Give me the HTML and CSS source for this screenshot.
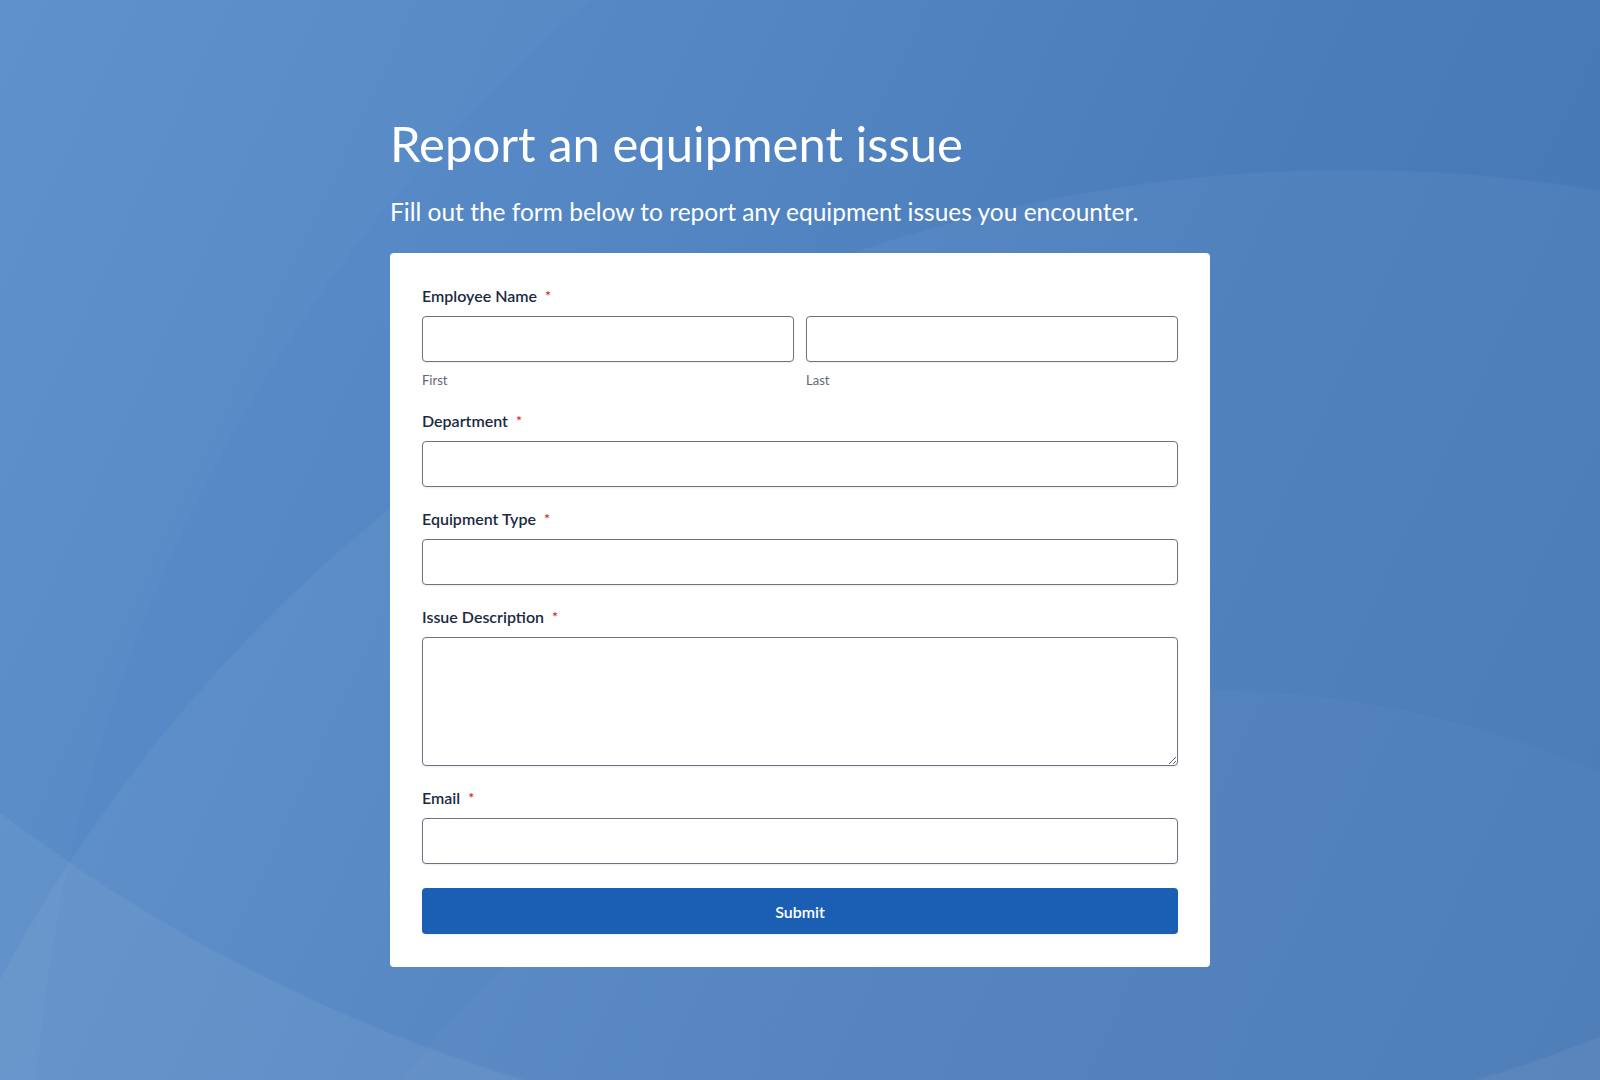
FILE: index.html
```html
<!DOCTYPE html>
<html lang="en">
<head>
<meta charset="utf-8">
<title>Report an equipment issue</title>
<link rel="stylesheet" href="styles.css">
</head>
<body>
<main class="page">
  <header class="intro">
    <h1 class="title">Report an equipment issue</h1>
    <p class="subtitle">Fill out the form below to report any equipment issues you encounter.</p>
  </header>
  <form class="card">
    <div class="field">
      <label class="label">Employee Name<span class="req">*</span></label>
      <div class="name-row">
        <div class="name-col">
          <input class="input" type="text">
          <span class="sublabel">First</span>
        </div>
        <div class="name-col">
          <input class="input" type="text">
          <span class="sublabel">Last</span>
        </div>
      </div>
    </div>
    <div class="field">
      <label class="label">Department<span class="req">*</span></label>
      <input class="input" type="text">
    </div>
    <div class="field">
      <label class="label">Equipment Type<span class="req">*</span></label>
      <input class="input" type="text">
    </div>
    <div class="field">
      <label class="label">Issue Description<span class="req">*</span></label>
      <textarea class="input textarea"></textarea>
    </div>
    <div class="field last">
      <label class="label">Email<span class="req">*</span></label>
      <input class="input" type="email">
    </div>
    <button class="submit" type="button">Submit</button>
  </form>
</main>
</body>
</html>
```

FILE: styles.css
```css
* { box-sizing: border-box; }

html, body {
  margin: 0;
  padding: 0;
  height: 100%;
}

body {
  font-family: Lato, "Noto Sans", "Liberation Sans", sans-serif;
  min-height: 1080px;
  background-color: #4f82c0;
  background-image:
    radial-gradient(circle at 1200px 1700px, rgba(255,255,255,0.02) 1009px, rgba(255,255,255,0) 1011px),
    radial-gradient(circle at 1000px -500px, rgba(255,255,255,0) 1649px, rgba(255,255,255,0.055) 1651px),
    radial-gradient(circle at 1350px 1700px, rgba(255,255,255,0.045) 1529px, rgba(255,255,255,0) 1531px),
    radial-gradient(circle at 1600px 1200px, rgba(255,255,255,0) 1567px, rgba(255,255,255,0.02) 1569px),
    linear-gradient(115deg, #5c90cb 0%, #5386c3 35%, #4a7cba 65%, #4476b4 100%);
}

.page {
  width: 820px;
  margin: 0 auto;
  padding-top: 114px;
  padding-bottom: 40px;
}

.intro {
  color: #ffffff;
}

.title {
  margin: 0;
  font-size: 49px;
  line-height: 58px;
  font-weight: 400;
  letter-spacing: 0;
}

.subtitle {
  margin: 24px 0 0;
  font-size: 24.5px;
  line-height: 32px;
  font-weight: 400;
}

.card {
  margin-top: 25px;
  background: #ffffff;
  border-radius: 4px;
  padding: 33px 32px 33px;
  display: flex;
  flex-direction: column;
}

.field {
  display: flex;
  flex-direction: column;
  margin-bottom: 22px;
}

.field.last {
  margin-bottom: 24px;
}

.label {
  font-size: 16px;
  line-height: 20px;
  font-weight: 600;
  color: #1c2a3f;
  margin-bottom: 10px;
}

.req {
  color: #d0271d;
  font-size: 14px;
  line-height: 0;
  margin-left: 8px;
  position: relative;
  top: -1px;
}

.name-row {
  display: grid;
  grid-template-columns: 1fr 1fr;
  column-gap: 12px;
}

.name-col {
  display: flex;
  flex-direction: column;
}

.input {
  display: block;
  width: 100%;
  height: 46px;
  border: 1px solid #6d7380;
  border-radius: 4px;
  background: #ffffff;
  box-shadow: 0 1px 2px rgba(16, 24, 40, 0.08);
  font-family: inherit;
  font-size: 15px;
  padding: 0 12px;
  margin: 0;
}

.textarea {
  height: 129px;
  resize: vertical;
  padding: 10px 12px;
}

.sublabel {
  margin-top: 9px;
  font-size: 13px;
  line-height: 18px;
  color: #5f6673;
}

.submit {
  height: 46px;
  border: none;
  border-radius: 4px;
  background: #1a5fb4;
  color: #ffffff;
  font-family: inherit;
  font-size: 16px;
  font-weight: 600;
  cursor: pointer;
  box-shadow: 0 1px 2px rgba(16, 24, 40, 0.08);
}
```
